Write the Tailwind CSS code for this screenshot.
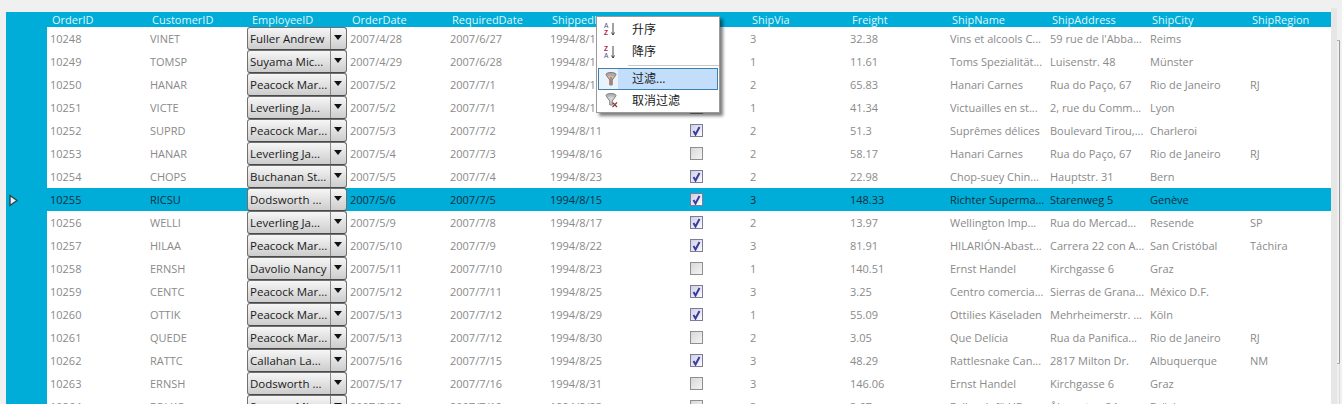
<!DOCTYPE html>
<html lang="zh">

<head>
    <meta charset="UTF-8">
    <meta name="viewport" content="width=device-width, initial-scale=1.0">
    <title>Orders</title>
    <script src="https://cdn.jsdelivr.net/npm/@tailwindcss/browser@4"></script>
</head>

<body class="h-[404px] w-[1342px] overflow-hidden bg-[#f0f0f0] font-['Open_Sans','Noto_Sans_CJK_SC',sans-serif] text-[11px] text-[#8a8a8a]">
    <div class="relative flex h-[404px]">
        <div class="ml-[6px] mt-[12px] flex w-[1325px] flex-col overflow-hidden">
            <div id="head" class="flex h-[15px] shrink-0 items-center bg-[#00acd8] pl-[41px] text-[#dff5fb]"></div>
            <div class="flex">
                <div class="relative w-[41px] shrink-0 bg-[#00acd8]">
                    <svg class="absolute left-[2px] top-[167px]" width="11" height="13" viewBox="0 0 11 13">
                        <path d="M2 1.5 L9 6.5 L2 11.5 Z" fill="#dff3f8" stroke="#33424a" stroke-width="1.4" />
                    </svg>
                </div>
                <div id="rows" class="flex-1 bg-white"></div>
            </div>
        </div>
        <div class="mt-[8px] w-[6px] bg-[#e6e6e6]"></div>

        <!-- context menu -->
        <div class="absolute left-[596px] top-[16px] w-[124px] border border-[#9a9a9a] bg-white pt-[2px] text-[12px] text-[#1a1a1a] shadow-[3px_3px_3px_rgba(0,0,0,0.5)]">
            <div class="flex h-[22px] items-center pl-[35px]">
                <svg class="absolute left-[6px] top-[4px]" width="16" height="17" viewBox="0 0 16 17" fill="none">
                    <text x="1" y="7" font-size="6.5" font-family="Liberation Sans" fill="#3b4f86">A</text>
                    <text x="1" y="14" font-size="6.5" font-weight="bold" font-family="Liberation Sans" fill="#b0243f">Z</text>
                    <path d="M10 2 V14 M8.5 11.5 L10 14 L11.5 11.5" stroke="#444" />
                </svg>
                升序
            </div>
            <div class="flex h-[22px] items-center pl-[35px]">
                <svg class="absolute left-[6px] top-[26px]" width="16" height="17" viewBox="0 0 16 17" fill="none">
                    <text x="1" y="8" font-size="6.5" font-weight="bold" font-family="Liberation Sans" fill="#b0243f">Z</text>
                    <text x="1" y="15" font-size="6.5" font-family="Liberation Sans" fill="#3b4f86">A</text>
                    <path d="M10 3 V15 M8.5 12.5 L10 15 L11.5 12.5" stroke="#444" />
                </svg>
                降序
            </div>
            <div class="my-[2px] ml-[31px] h-px bg-[#c8c8c8]"></div>
            <div class="relative mx-[1px] flex h-[22px] items-center border border-[#3c7fb1] bg-[#c2defa] pl-[33px]">
                <div class="absolute left-0 top-0 h-[20px] w-[19px] bg-[#eaf3fc]"></div>
                <svg class="absolute left-[6px] top-[3px]" width="13" height="14" viewBox="0 0 13 14" fill="none">
                    <ellipse cx="6" cy="2.5" rx="5" ry="2" fill="#a9a9a9" stroke="#7a7a7a" />
                    <path d="M1.5 3.5 L4.8 8 V13 H7.2 V8 L10.5 3.5" fill="#cdb9a4" stroke="#7a7a7a" />
                    <path d="M6 5 V12" stroke="#a9543f" />
                </svg>
                过滤...
            </div>
            <div class="flex h-[22px] items-center pl-[35px]">
                <svg class="absolute left-[8px] top-[76px]" width="14" height="15" viewBox="0 0 14 15" fill="none">
                    <ellipse cx="6" cy="2.5" rx="5" ry="2" fill="#b5b5b5" stroke="#7f7f7f" />
                    <path d="M1.5 3.5 L4.8 8 V12 H7.2 V8 L10.5 3.5" fill="#d4d4d4" stroke="#7f7f7f" />
                    <path d="M7.5 9.5 L12 14 M12 9.5 L7.5 14" stroke="#8a3a40" stroke-width="1.3" />
                </svg>
                取消过滤
            </div>
        </div>

        <div class="absolute left-[1339px] top-[40px] h-[324px] w-px bg-[#9a9a9a]"></div>
        <div class="absolute left-[1337px] top-[40px] h-px w-[3px] bg-[#b0b0b0]"></div>
        <div class="absolute left-[1337px] top-[363px] h-px w-[3px] bg-[#b0b0b0]"></div>
        <div class="absolute left-[1339px] top-[364px] h-[40px] w-px bg-[#dcdcdc]"></div>
    </div>

    <script>
        const cols = ['OrderID', 'CustomerID', 'EmployeeID', 'OrderDate', 'RequiredDate', 'ShippedDate', 'Shipped',
            'ShipVia', 'Freight', 'ShipName', 'ShipAddress', 'ShipCity', 'ShipRegion'];
        const data = [
            ['10248', 'VINET', 'Fuller Andrew', '2007/4/28', '2007/6/27', '1994/8/16', 0, '3', '32.38', 'Vins et alcools C...', "59 rue de l'Abba...", 'Reims', ''],
            ['10249', 'TOMSP', 'Suyama Mic...', '2007/4/29', '2007/6/28', '1994/8/10', 0, '1', '11.61', 'Toms Spezialität...', 'Luisenstr. 48', 'Münster', ''],
            ['10250', 'HANAR', 'Peacock Mar...', '2007/5/2', '2007/7/1', '1994/8/12', 0, '2', '65.83', 'Hanari Carnes', 'Rua do Paço, 67', 'Rio de Janeiro', 'RJ'],
            ['10251', 'VICTE', 'Leverling Ja...', '2007/5/2', '2007/7/1', '1994/8/15', 0, '1', '41.34', 'Victuailles en st...', '2, rue du Comm...', 'Lyon', ''],
            ['10252', 'SUPRD', 'Peacock Mar...', '2007/5/3', '2007/7/2', '1994/8/11', 1, '2', '51.3', 'Suprêmes délices', 'Boulevard Tirou,...', 'Charleroi', ''],
            ['10253', 'HANAR', 'Leverling Ja...', '2007/5/4', '2007/7/3', '1994/8/16', 0, '2', '58.17', 'Hanari Carnes', 'Rua do Paço, 67', 'Rio de Janeiro', 'RJ'],
            ['10254', 'CHOPS', 'Buchanan St...', '2007/5/5', '2007/7/4', '1994/8/23', 1, '2', '22.98', 'Chop-suey Chin...', 'Hauptstr. 31', 'Bern', ''],
            ['10255', 'RICSU', 'Dodsworth ...', '2007/5/6', '2007/7/5', '1994/8/15', 1, '3', '148.33', 'Richter Superma...', 'Starenweg 5', 'Genève', ''],
            ['10256', 'WELLI', 'Leverling Ja...', '2007/5/9', '2007/7/8', '1994/8/17', 1, '2', '13.97', 'Wellington Imp...', 'Rua do Mercad...', 'Resende', 'SP'],
            ['10257', 'HILAA', 'Peacock Mar...', '2007/5/10', '2007/7/9', '1994/8/22', 1, '3', '81.91', 'HILARIÓN-Abast...', 'Carrera 22 con A...', 'San Cristóbal', 'Táchira'],
            ['10258', 'ERNSH', 'Davolio Nancy', '2007/5/11', '2007/7/10', '1994/8/23', 0, '1', '140.51', 'Ernst Handel', 'Kirchgasse 6', 'Graz', ''],
            ['10259', 'CENTC', 'Peacock Mar...', '2007/5/12', '2007/7/11', '1994/8/25', 1, '3', '3.25', 'Centro comercia...', 'Sierras de Grana...', 'México D.F.', ''],
            ['10260', 'OTTIK', 'Peacock Mar...', '2007/5/13', '2007/7/12', '1994/8/29', 1, '1', '55.09', 'Ottilies Käseladen', 'Mehrheimerstr. ...', 'Köln', ''],
            ['10261', 'QUEDE', 'Peacock Mar...', '2007/5/13', '2007/7/12', '1994/8/30', 0, '2', '3.05', 'Que Delícia', 'Rua da Panifica...', 'Rio de Janeiro', 'RJ'],
            ['10262', 'RATTC', 'Callahan La...', '2007/5/16', '2007/7/15', '1994/8/25', 1, '3', '48.29', 'Rattlesnake Can...', '2817 Milton Dr.', 'Albuquerque', 'NM'],
            ['10263', 'ERNSH', 'Dodsworth ...', '2007/5/17', '2007/7/16', '1994/8/31', 0, '3', '146.06', 'Ernst Handel', 'Kirchgasse 6', 'Graz', ''],
            ['10264', 'FOLKO', 'Suyama Mic...', '2007/5/20', '2007/7/19', '1994/8/23', 0, '3', '3.67', 'Folk och fä HB', 'Åkergatan 24', 'Bräcke', '']
        ];

        document.getElementById('head').innerHTML = cols.map(c =>
            `<div class="w-[100px] shrink-0 pl-[5px] pt-[2px]">${c}</div>`).join('');

        const combo = name => `
            <div class="flex h-[23px] w-[100px] shrink-0 rounded-[3px] border border-[#707070] border-b-[#4a4a4a] bg-gradient-to-b from-[#f6f6f6] to-[#cdcdcd] text-[11.5px] text-[#1a1a1a]">
                <div class="w-[82px] truncate pl-[2px] leading-[21px]">${name}</div>
                <div class="flex w-[16px] items-center justify-center border-l border-[#8a8a8a] pb-[2px] pr-[1px]">
                    <svg width="8" height="5" viewBox="0 0 8 5"><path d="M0 0 H8 L4 5 Z" fill="#111" /></svg>
                </div>
            </div>`;

        const check = on => `
            <div class="ml-[43px] flex h-[13px] w-[13px] items-center justify-center border ${on ? 'border-[#7c7c98] bg-gradient-to-br from-[#cfcfe6] to-[#fbfbff]' : 'border-[#8e8f8f] bg-gradient-to-br from-[#d8d8d8] to-[#f4f4f4]'}">
                ${on ? '<svg width="9" height="10" viewBox="0 0 9 10" fill="none"><path d="M1.5 5 L3.5 8.5 L7.5 1" stroke="#3a3d9e" stroke-width="2" /></svg>' : ''}
            </div>`;

        document.getElementById('rows').innerHTML = data.map((r, i) => {
            const cells = r.map((v, j) => {
                if (j === 2) return combo(v);
                if (j === 6) return `<div class="w-[100px] shrink-0">${check(v)}</div>`;
                return `<div class="w-[100px] shrink-0 truncate pl-[3px] pt-[2px]">${v}</div>`;
            }).join('');
            return `<div class="flex h-[23px] items-center ${i === 7 ? 'bg-[#00acd8] text-[#12303c]' : ''}">${cells}</div>`;
        }).join('');
    </script>
</body>

</html>
